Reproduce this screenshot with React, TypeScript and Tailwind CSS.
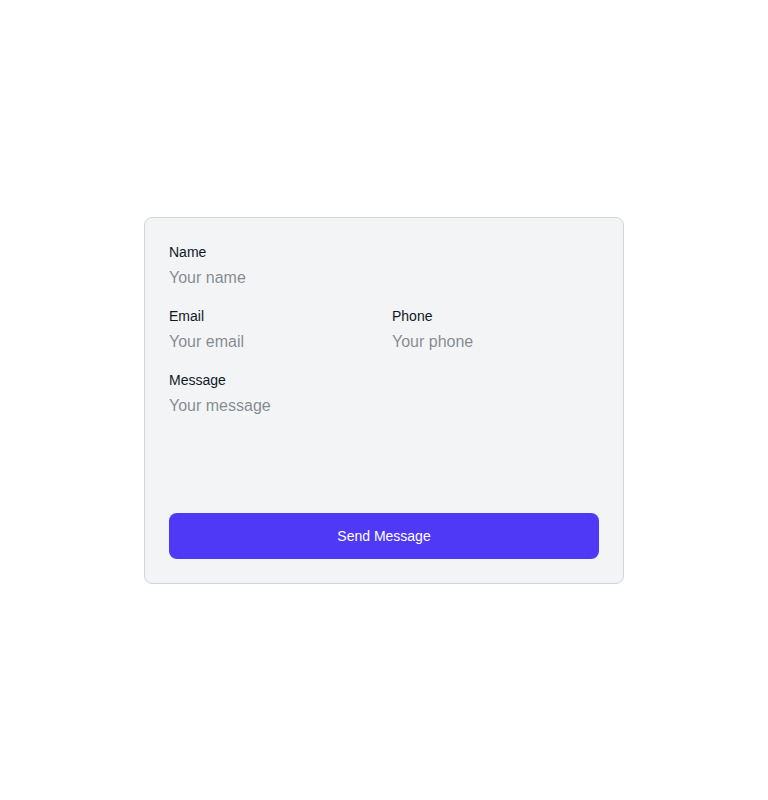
import React from "react";

export default function App() {
  return (
    <div
      className="min-h-screen flex items-center justify-center bg-white"
      style={{ fontFamily: '"Liberation Sans", Arial, sans-serif' }}
    >
      <form
        className="w-[480px] rounded-lg border border-gray-300 bg-gray-100 p-6 flex flex-col gap-4"
        onSubmit={(e) => e.preventDefault()}
      >
        <div className="flex flex-col gap-1">
          <label className="text-sm text-gray-900">Name</label>
          <input
            className="block h-6 w-full bg-transparent text-base text-gray-900 outline-none"
            placeholder="Your name"
          />
        </div>
        <div className="grid grid-cols-2 gap-4">
          <div className="flex flex-col gap-1">
            <label className="text-sm text-gray-900">Email</label>
            <input
              className="block h-6 w-full bg-transparent text-base text-gray-900 outline-none"
              placeholder="Your email"
            />
          </div>
          <div className="flex flex-col gap-1">
            <label className="text-sm text-gray-900">Phone</label>
            <input
              className="block h-6 w-full bg-transparent text-base text-gray-900 outline-none"
              placeholder="Your phone"
            />
          </div>
        </div>
        <div className="flex flex-col gap-1">
          <label className="text-sm text-gray-900">Message</label>
          <textarea
            className="block h-[103px] w-full resize-none bg-transparent text-base text-gray-900 outline-none"
            placeholder="Your message"
          />
        </div>
        <button
          type="submit"
          className="h-[46px] w-full rounded-lg bg-indigo-600 text-sm text-white"
        >
          Send Message
        </button>
      </form>
    </div>
  );
}
